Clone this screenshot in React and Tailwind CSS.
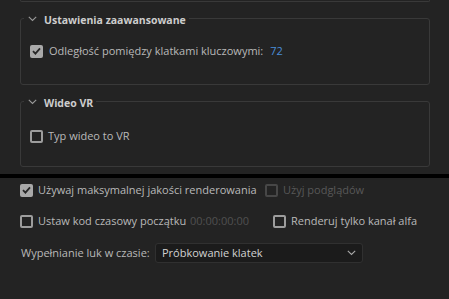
import React from "react";

function Check({ checked, disabled }) {
  if (checked) {
    return (
      <span className="w-[13px] h-[13px] rounded-[2px] bg-[#a9a9a9] flex items-center justify-center shrink-0">
        <svg width="9" height="8" viewBox="0 0 9 8">
          <path d="M1 4.2 L3.4 6.6 L8 1.4" fill="none" stroke="#262626" strokeWidth="1.8" />
        </svg>
      </span>
    );
  }
  return (
    <span
      className={
        "w-[13px] h-[13px] rounded-[2px] border-2 shrink-0 " +
        (disabled ? "border-[#474747]" : "border-[#9d9d9d]")
      }
    />
  );
}

function Chevron({ color = "#9a9a9a" }) {
  return (
    <svg width="9" height="6" viewBox="0 0 9 6">
      <path d="M0.8 0.8 L4.5 4.5 L8.2 0.8" fill="none" stroke={color} strokeWidth="1.1" />
    </svg>
  );
}

function Section({ title, children, className }) {
  return (
    <fieldset className={"ml-[20px] w-[410px] border border-[#393939] rounded-[3px] " + className}>
      <legend className="ml-[3px] px-[3px] h-[16px] leading-[16px]">
        <span className="inline-flex items-center h-[16px]">
          <span className="ml-[1px] mt-[-2px]"><Chevron /></span>
          <span className="ml-[7px] font-bold text-[10.5px] text-[#cdcdcd]">{title}</span>
        </span>
      </legend>
      {children}
    </fieldset>
  );
}

export default function App() {
  return (
    <div className="w-[449px] h-[299px] bg-[#232323] overflow-hidden text-[11px] text-[#b9b9b9]" style={{ fontFamily: "'Open Sans', 'Noto Sans', sans-serif" }}>
      <div className="h-[174px]">
        <div className="ml-[20px] w-[410px] h-[2px] border-x border-b border-[#393939] rounded-b-[3px]" />
        <Section title="Ustawienia zaawansowane" className="mt-[8px] pt-[18px] pb-[26px]">
          <div className="flex items-center h-[14px] pl-[9px]">
            <Check checked />
            <span className="ml-[6px]">Odległość pomiędzy klatkami kluczowymi:</span>
            <span className="ml-[7px] text-[#4a8ed8]">72</span>
          </div>
        </Section>
        <Section title="Wideo VR" className="mt-[8px] pt-[20px] pb-[23px]">
          <div className="flex items-center h-[14px] pl-[9px]">
            <Check />
            <span className="ml-[5px]">Typ wideo to VR</span>
          </div>
        </Section>
      </div>
      <div className="h-[4px] bg-black" />
      <div className="pl-[20px] pt-[5px]">
        <div className="flex items-center h-[14px]">
          <div className="w-[245px] flex items-center">
            <Check checked />
            <span className="ml-[5px]">Używaj maksymalnej jakości renderowania</span>
          </div>
          <Check disabled />
          <span className="ml-[5px] text-[#585858]">Użyj podglądów</span>
        </div>
        <div className="flex items-center h-[14px] mt-[17px]">
          <div className="w-[170px] flex items-center">
            <Check />
            <span className="ml-[5px]">Ustaw kod czasowy początku</span>
          </div>
          <span className="w-[83px] text-[#505050]">00:00:00:00</span>
          <Check />
          <span className="ml-[5px]">Renderuj tylko kanał alfa</span>
        </div>
        <div className="flex items-center mt-[15px]">
          <span className="w-[135px] pl-[1px]">Wypełnianie luk w czasie:</span>
          <div className="w-[208px] h-[20px] bg-[#1b1b1b] border border-[#303030] rounded-[3px] flex items-center pl-[6px] pr-[6px]">
            <span className="flex-1 text-[#d2d2d2]">Próbkowanie klatek</span>
            <Chevron color="#a8a8a8" />
          </div>
        </div>
      </div>
    </div>
  );
}
